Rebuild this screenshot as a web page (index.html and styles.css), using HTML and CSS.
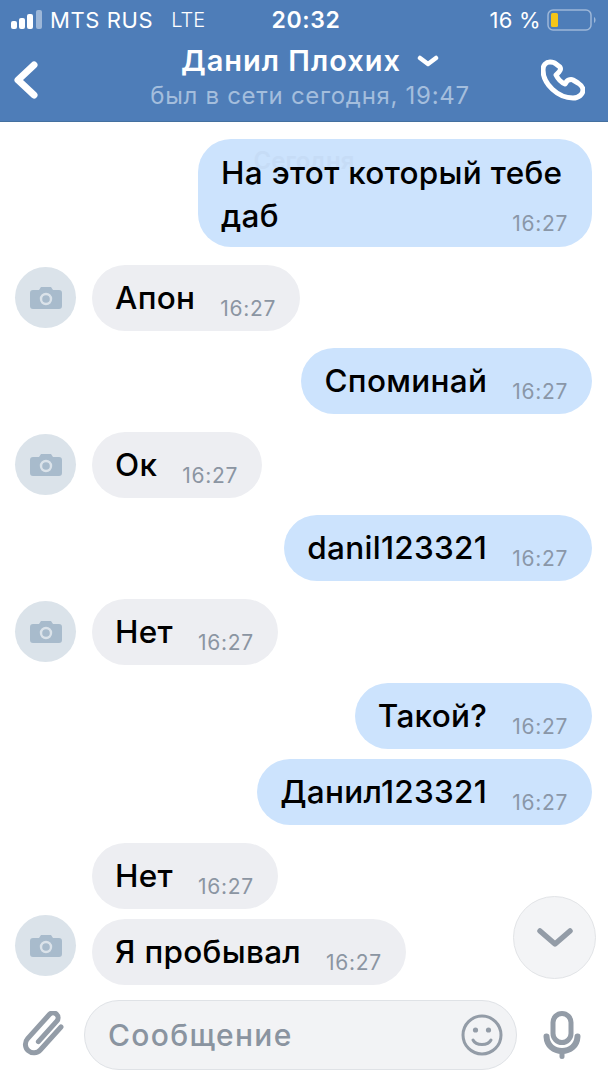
FILE: index.html
```html
<!DOCTYPE html>
<html lang="ru">
<head>
<meta charset="utf-8">
<title>Данил Плохих</title>
<link rel="stylesheet" href="styles.css">
</head>
<body>
<div class="app">
  <header class="top">
    <div class="status">
      <div class="status-left">
        <svg class="signal" width="32" height="20" viewBox="0 0 32 20"><rect x="0" y="11" width="6" height="8" rx="2" fill="#fff"/><rect x="8" y="8" width="6" height="11" rx="2" fill="#fff"/><rect x="16" y="4" width="6" height="15" rx="2" fill="#fff"/><rect x="25" y="0" width="6" height="19" rx="2" fill="#9db7d8"/></svg>
        <span class="carrier">MTS RUS</span>
        <span class="lte">LTE</span>
      </div>
      <div class="clock">20:32</div>
      <div class="status-right">
        <span class="pct">16 %</span>
        <svg width="50" height="22" viewBox="0 0 50 22"><rect x="1" y="1" width="43" height="20" rx="5" fill="none" stroke="#9db7d8" stroke-width="1.5"/><rect x="4" y="4" width="7" height="14" rx="1.5" fill="#f5c518"/><path d="M47 8c2 1 2 5 0 6z" fill="#9db7d8"/></svg>
      </div>
    </div>
    <div class="nav">
      <svg class="back" width="26" height="40" viewBox="0 0 26 40"><path d="M21 5 5 20l16 15" fill="none" stroke="#fff" stroke-width="7" stroke-linecap="round" stroke-linejoin="round"/></svg>
      <div class="who">
        <div class="name-row">
          <span class="name">Данил Плохих</span>
          <svg width="22" height="14" viewBox="0 0 22 14"><path d="M3 4l8 6 8-6" fill="none" stroke="#fff" stroke-width="4.5" stroke-linecap="round" stroke-linejoin="round"/></svg>
        </div>
        <div class="seen">был в сети сегодня, 19:47</div>
      </div>
      <svg class="call" width="44" height="42" viewBox="0 0 44 42"><path d="M9 3C5 3 2 6 2 11c0 14 15 28 30 28 6 0 10-4 10-8 0-3-2-5-5-7l-5-3c-2-1-5 0-6 1l-2 3c-5-2-7-5-9-9l3-3c1-1 2-3 1-5l-4-3c-2-2-4-2-6-2z" fill="none" stroke="#fff" stroke-width="5" stroke-linejoin="round"/></svg>
    </div>
  </header>

  <main class="chat">
    <div class="day">Сегодня</div>

    <div class="row out">
      <div class="bubble multi">
        <div class="line">На этот который тебе</div>
        <div class="line-last"><span>даб</span><time class="time">16:27</time></div>
      </div>
    </div>

    <div class="row in gap">
      <div class="avatar"><svg width="32" height="22" viewBox="0 0 32 22"><path d="M3 3h6l2-3h10l2 3h6a3 3 0 0 1 3 3v13a3 3 0 0 1-3 3H3a3 3 0 0 1-3-3V6a3 3 0 0 1 3-3z" fill="#a8bbcc"/><circle cx="16" cy="12" r="5" fill="none" stroke="#dbe3ea" stroke-width="2.4"/></svg></div>
      <div class="bubble"><span>Апон</span><time class="time">16:27</time></div>
    </div>

    <div class="row out gap">
      <div class="bubble"><span>Споминай</span><time class="time">16:27</time></div>
    </div>

    <div class="row in gap">
      <div class="avatar"><svg width="32" height="22" viewBox="0 0 32 22"><path d="M3 3h6l2-3h10l2 3h6a3 3 0 0 1 3 3v13a3 3 0 0 1-3 3H3a3 3 0 0 1-3-3V6a3 3 0 0 1 3-3z" fill="#a8bbcc"/><circle cx="16" cy="12" r="5" fill="none" stroke="#dbe3ea" stroke-width="2.4"/></svg></div>
      <div class="bubble"><span>Ок</span><time class="time">16:27</time></div>
    </div>

    <div class="row out gap">
      <div class="bubble"><span>danil123321</span><time class="time">16:27</time></div>
    </div>

    <div class="row in gap">
      <div class="avatar"><svg width="32" height="22" viewBox="0 0 32 22"><path d="M3 3h6l2-3h10l2 3h6a3 3 0 0 1 3 3v13a3 3 0 0 1-3 3H3a3 3 0 0 1-3-3V6a3 3 0 0 1 3-3z" fill="#a8bbcc"/><circle cx="16" cy="12" r="5" fill="none" stroke="#dbe3ea" stroke-width="2.4"/></svg></div>
      <div class="bubble"><span>Нет</span><time class="time">16:27</time></div>
    </div>

    <div class="row out gap">
      <div class="bubble"><span>Такой?</span><time class="time">16:27</time></div>
    </div>

    <div class="row out near">
      <div class="bubble"><span>Данил123321</span><time class="time">16:27</time></div>
    </div>

    <div class="row in gap indent">
      <div class="bubble"><span>Нет</span><time class="time">16:27</time></div>
    </div>

    <div class="row in near">
      <div class="avatar"><svg width="32" height="22" viewBox="0 0 32 22"><path d="M3 3h6l2-3h10l2 3h6a3 3 0 0 1 3 3v13a3 3 0 0 1-3 3H3a3 3 0 0 1-3-3V6a3 3 0 0 1 3-3z" fill="#a8bbcc"/><circle cx="16" cy="12" r="5" fill="none" stroke="#dbe3ea" stroke-width="2.4"/></svg></div>
      <div class="bubble"><span>Я пробывал</span><time class="time">16:27</time></div>
    </div>

    <button class="scroll-down"><svg width="36" height="20" viewBox="0 0 36 20"><path d="M3 3l15 13L33 3" fill="none" stroke="#939ca7" stroke-width="5.5" stroke-linecap="round" stroke-linejoin="round"/></svg></button>
  </main>

  <footer class="composer">
    <svg class="clip" width="42" height="48" viewBox="0 0 42 48"><g transform="rotate(42 21 24)"><path d="M29 6v31a8.500 8.500 0 0 1-17 0V4.500a5 5 0 0 1 10 0V32" fill="none" stroke="#939ca7" stroke-width="5" stroke-linecap="round"/></g></svg>
    <div class="field">
      <span class="placeholder">Сообщение</span>
      <svg width="42" height="42" viewBox="0 0 42 42"><circle cx="21" cy="21" r="19" fill="none" stroke="#939ca7" stroke-width="3"/><circle cx="14.500" cy="16" r="2.600" fill="#939ca7"/><circle cx="27.500" cy="16" r="2.600" fill="#939ca7"/><path d="M12 26c3 6 15 6 18 0" fill="none" stroke="#939ca7" stroke-width="3" stroke-linecap="round"/></svg>
    </div>
    <svg class="mic" width="38" height="48" viewBox="0 0 38 48"><rect x="10" y="2.500" width="18" height="29" rx="9" fill="none" stroke="#939ca7" stroke-width="5"/><path d="M3.500 25.500C4 35 11 40 19 40s15-5 15.500-14.500" fill="none" stroke="#939ca7" stroke-width="6" stroke-linecap="round"/><rect x="16.500" y="38" width="5" height="10" rx="2.500" fill="#939ca7"/></svg>
  </footer>
</div>
</body>
</html>
```

FILE: styles.css
```css
* { box-sizing: border-box; }
html, body { margin: 0; padding: 0; }
body {
  width: 608px;
  height: 1080px;
  overflow: hidden;
  background: #fff;
  font-family: Inter, "Liberation Sans", sans-serif;
  color: #000;
}
.app { display: flex; flex-direction: column; height: 1080px; }

.top {
  height: 122px;
  background: #4e7db8;
  border-bottom: 1px solid #44709f;
  color: #fff;
  flex: none;
}
.status {
  display: grid;
  grid-template-columns: 1fr auto 1fr;
  align-items: center;
  height: 40px;
  padding: 0 11px;
  font-size: 22px;
  color: #fff;
}
.status-left { display: flex; align-items: center; }
.signal { margin-right: 7px; }
.carrier { letter-spacing: 0.6px; }
.lte { margin-left: 18px; font-size: 20px; font-weight: 300; }
.clock { font-size: 23px; font-weight: 600; letter-spacing: 0.6px; padding-left: 4px; }
.status-right { display: flex; align-items: center; justify-content: flex-end; gap: 6px; }
.pct { letter-spacing: 0.3px; }

.nav {
  display: grid;
  grid-template-columns: 54px 1fr 70px;
  align-items: center;
  height: 81px;
}
.back { margin-left: 13px; margin-top: -2px; }
.who { display: flex; flex-direction: column; align-items: center; padding-left: 28px; margin-top: -9px; }
.name-row { display: flex; align-items: center; gap: 16px; height: 40px; margin-top: -2px; }
.name { font-size: 29px; font-weight: 600; letter-spacing: 1px; }
.seen { font-size: 24px; color: #a4bedd; letter-spacing: 0.7px; }
.call { margin-left: 3px; margin-top: -1px; }

.chat {
  position: relative;
  flex: 1;
  padding-top: 17px;
}
.day {
  position: absolute;
  top: 24px;
  left: 0;
  right: 0;
  text-align: center;
  font-size: 24px;
  font-weight: 600;
  color: #c6dcf6;
  z-index: 1;
}
.row { display: flex; align-items: center; }
.row.out { justify-content: flex-end; padding-right: 16px; }
.row.in { padding-left: 15px; gap: 16px; }
.row.indent { padding-left: 92px; }
.gap { margin-top: 17.6px; }
.near { margin-top: 10.4px; }
.row.near .avatar { margin-top: -12px; }

.bubble {
  display: flex;
  align-items: flex-end;
  height: 66px;
  padding: 0 24px 0 23px;
  border-radius: 33px;
  font-size: 31.5px;
  font-weight: 500;
  letter-spacing: 0.3px;
  line-height: 66px;
  gap: 25px;
  background: #edeef2;
}
.out .bubble { background: #cce3fd; }
.time {
  font-size: 21px;
  font-weight: 400;
  letter-spacing: 0.7px;
  line-height: 25px;
  padding-bottom: 10px;
  color: #8b95a2;
}
.out .time { color: #8a97a8; }
.bubble.multi {
  position: relative;
  display: block;
  width: 394px;
  height: 108px;
  padding-top: 12px;
  line-height: 43px;
  border-radius: 33px;
}
.line, .line-last { position: relative; z-index: 2; }
.line-last { display: flex; justify-content: space-between; align-items: flex-end; }
.line-last .time { padding-bottom: 1px; }

.avatar {
  flex: none;
  width: 61px;
  height: 61px;
  border-radius: 50%;
  background: #dbe3ea;
  display: flex;
  align-items: center;
  justify-content: center;
}

.scroll-down {
  position: absolute;
  right: 12px;
  top: 774px;
  width: 83px;
  height: 83px;
  padding: 0;
  border-radius: 50%;
  border: 1.5px solid #e2e4e7;
  background: #f3f4f6;
  display: flex;
  align-items: center;
  justify-content: center;
}

.composer {
  flex: none;
  display: flex;
  align-items: center;
  height: 80px;
  padding: 0 26px 0 22px;
}
.clip { flex: none; margin-right: 20px; }
.field {
  width: 433px;
  height: 70px;
  margin-bottom: 10px;
  display: flex;
  align-items: center;
  justify-content: space-between;
  padding: 0 13px 0 23px;
  border-radius: 35px;
  background: #f2f3f5;
  border: 1.5px solid #dfe2e6;
}
.clip, .mic { margin-bottom: 10px; }
.placeholder { font-size: 30px; color: #8a94a0; font-weight: 500; letter-spacing: 1.3px; }
.mic { flex: none; margin-left: 26px; }
```
